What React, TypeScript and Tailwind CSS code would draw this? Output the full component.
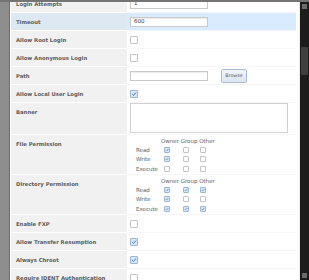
import React from 'react';

const labelFont = { fontFamily: '"DejaVu Sans", Verdana, sans-serif' };

function Check({ on = false, size = 'md' }: { on?: boolean; size?: 'md' | 'sm' }) {
  const dim = size === 'md' ? 'h-[8px] w-[8px]' : 'h-[6px] w-[6px]';
  return (
    <div
      className={`${dim} flex shrink-0 items-center justify-center rounded-[1px] border ${
        on ? 'border-[#9db7d3] bg-[#d7e7f7]' : 'border-[#c4c4c4] bg-white'
      }`}
    >
      {on && (
        <svg viewBox="0 0 10 10" className="h-full w-full">
          <path d="M2 5.2 L4.2 7.4 L8.2 2.6" fill="none" stroke="#3f7cc4" strokeWidth="1.6" />
        </svg>
      )}
    </div>
  );
}

function Row({
  label,
  children,
  h = 'h-[18px]',
  active = false,
  top = false,
}: {
  label: string;
  children?: React.ReactNode;
  h?: string;
  active?: boolean;
  top?: boolean;
}) {
  return (
    <div className={`flex ${h}`}>
      <div
        className={`w-[116px] shrink-0 border-b border-white pl-[5px] text-[5.3px] font-bold leading-[18px] text-[#5c5c5c] ${
          active ? 'bg-[#dde8f2]' : 'bg-[#f1f1f1]'
        }`}
        style={labelFont}
      >
        {label}
      </div>
      <div
        className={`flex flex-1 pl-[3px] ${top ? 'items-start' : 'items-center'} border-b border-[#f6f6f6] ${
          active ? 'bg-[#d9ecff]' : 'bg-white'
        }`}
      >
        {children}
      </div>
    </div>
  );
}

function TextBox({ value = '' }: { value?: string }) {
  return (
    <div
      className="flex h-[10px] w-[78px] items-center border border-[#c9c9c9] bg-white pl-[3px] text-[5.5px] text-[#333] shadow-[inset_0_1px_1px_rgba(0,0,0,0.08)]"
      style={labelFont}
    >
      {value}
    </div>
  );
}

function PermGrid({ rows }: { rows: [string, boolean, boolean, boolean][] }) {
  return (
    <div className="flex flex-col pt-[2px] text-[5.5px] text-[#5e5e5e]" style={labelFont}>
      <div className="h-[8px] pl-[31px] leading-[8px]">Owner Group Other</div>
      {rows.map(([name, o, g, x]) => (
        <div key={name} className="flex h-[9.5px] items-center">
          <div className="w-[31px] pl-[6px]">{name}</div>
          <div className="w-[19px] pl-[3px]">
            <Check on={o} size="sm" />
          </div>
          <div className="w-[17px] pl-[3px]">
            <Check on={g} size="sm" />
          </div>
          <div className="w-[17px] pl-[3px]">
            <Check on={x} size="sm" />
          </div>
        </div>
      ))}
    </div>
  );
}

export default function App() {
  return (
    <div className="flex h-[280px] w-[309px] flex-col overflow-hidden bg-white">
      <div className="h-[2px] shrink-0 bg-[#747474]" />
      <div className="flex min-h-0 flex-1">
        <div className="w-[10px] shrink-0 border-r border-[#6e6e6e] bg-[#8d8d8d]" />
        <div className="min-w-0 flex-1 overflow-hidden border-r border-[#ececec] pl-[1px] pr-[3px]">
          <div className="-mt-[7px] flex flex-col">
            <Row label="Login Attempts">
              <TextBox value="1" />
            </Row>
            <Row label="Timeout" active>
              <TextBox value="600" />
            </Row>
            <Row label="Allow Root Login">
              <Check />
            </Row>
            <Row label="Allow Anonymous Login">
              <Check />
            </Row>
            <Row label="Path">
              <TextBox />
              <div
                className="ml-[13px] flex h-[14px] w-[26px] items-center justify-center rounded-[2px] border border-[#a9bdd2] bg-gradient-to-b from-[#f2f6fb] to-[#d9e5f1] text-[4.8px] text-[#555]"
                style={labelFont}
              >
                Browse
              </div>
            </Row>
            <Row label="Allow Local User Login">
              <Check on />
            </Row>
            <Row label="Banner" h="h-[32px]" top>
              <div className="h-[30px] w-[158px] border border-[#d2d2d2] bg-white" />
            </Row>
            <Row label="File Permission" h="h-[40px]" top>
              <PermGrid
                rows={[
                  ['Read', true, false, false],
                  ['Write', true, false, false],
                  ['Execute', false, false, false],
                ]}
              />
            </Row>
            <Row label="Directory Permission" h="h-[40px]" top>
              <PermGrid
                rows={[
                  ['Read', true, true, true],
                  ['Write', true, false, false],
                  ['Execute', true, true, true],
                ]}
              />
            </Row>
            <Row label="Enable FXP">
              <Check />
            </Row>
            <Row label="Allow Transfer Resumption">
              <Check on />
            </Row>
            <Row label="Always Chroot">
              <Check on />
            </Row>
            <Row label="Require IDENT Authentication">
              <Check />
            </Row>
          </div>
        </div>
        <div className="flex w-[9px] shrink-0 flex-col bg-[#1c1c1c]">
          <div className="mx-[2px] mt-[2px] h-[5px] bg-[#6a6a6a]" />
          <div className="mx-[1px] mt-[38px] h-[28px] rounded-[1px] bg-[#3f3f3f]" />
          <div className="flex-1" />
          <div className="mx-[2px] mb-[2px] h-[5px] bg-[#6a6a6a]" />
        </div>
      </div>
    </div>
  );
}
